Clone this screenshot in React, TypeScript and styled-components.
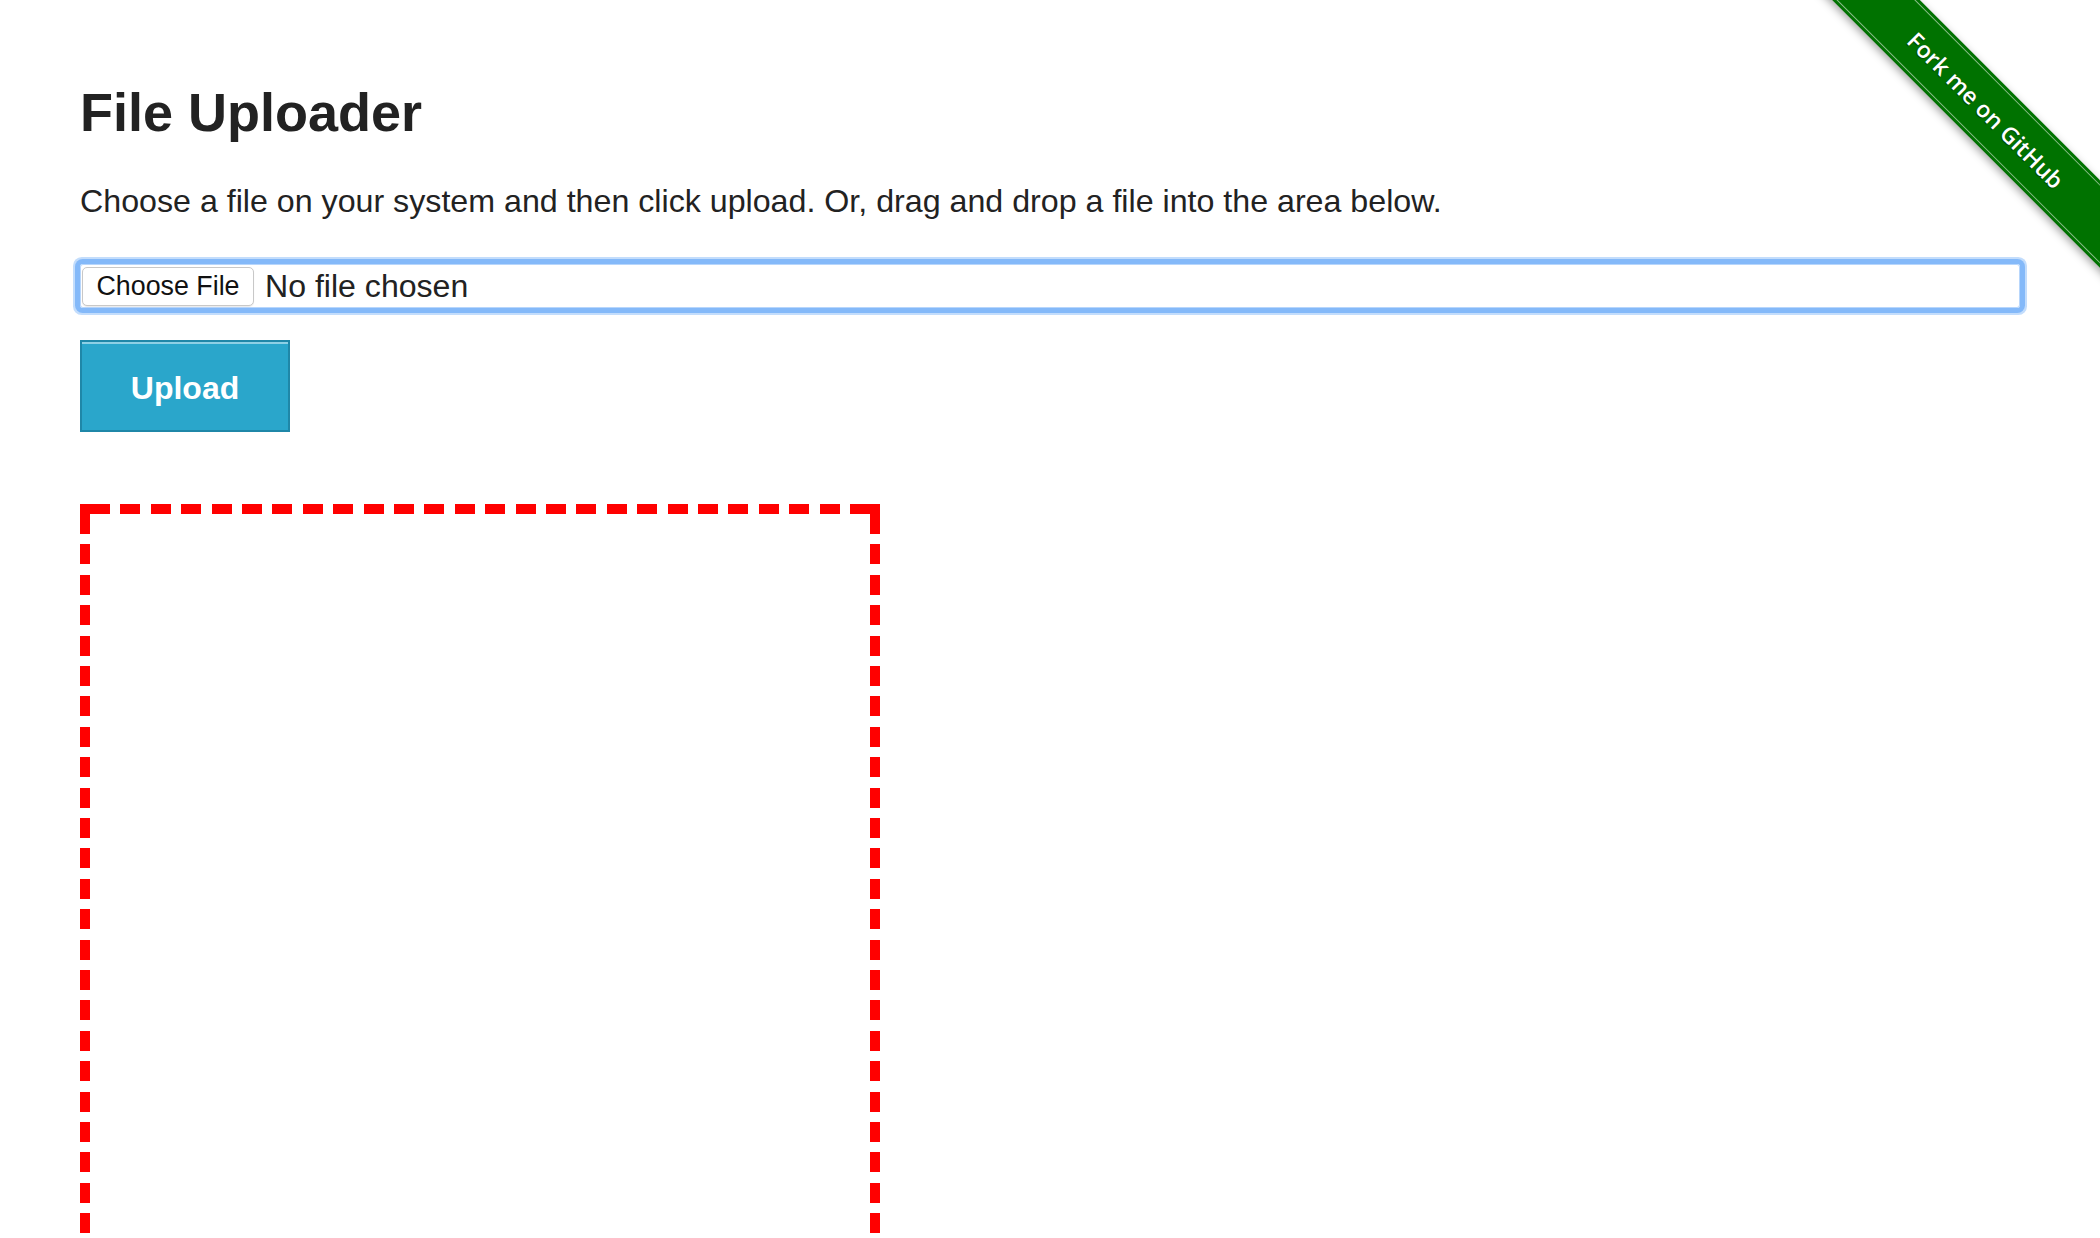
import React from "react";
import styled, { createGlobalStyle } from "styled-components";

const GlobalStyle = createGlobalStyle`
  html, body {
    margin: 0;
    padding: 0;
    background: #ffffff;
    overflow: hidden;
  }
  body {
    font-family: "Liberation Sans", Arial, Helvetica, sans-serif;
    color: #222222;
  }
`;

const Page = styled.main`
  position: relative;
  display: flex;
  flex-direction: column;
  align-items: flex-start;
  padding: 82px 80px 0 80px;
  min-height: 1238px;
  box-sizing: border-box;
`;

const Title = styled.h1`
  margin: 0 0 37px 0;
  font-size: 54px;
  line-height: 60px;
  font-weight: 700;
  color: #222222;
`;

const Lead = styled.p`
  margin: 0 0 41px 0;
  font-size: 32.2px;
  line-height: 44px;
  color: #222222;
`;

const FileField = styled.label`
  display: flex;
  align-items: center;
  gap: 11px;
  width: 100%;
  height: 44px;
  box-sizing: border-box;
  padding: 0 2px;
  border-radius: 3px;
  background: #ffffff;
  box-shadow: inset 0 0 0 1px #b7d6fc, 0 0 0 5px #84b9f9, 0 0 0 7px #c3ddfc;
  cursor: pointer;
`;

const HiddenInput = styled.input`
  display: none;
`;

const ChooseButton = styled.span`
  display: inline-flex;
  align-items: center;
  justify-content: center;
  width: 172px;
  height: 39px;
  box-sizing: border-box;
  border: 1px solid #c8c8c8;
  border-radius: 5px;
  background: #ffffff;
  box-shadow: 0 1px 1px rgba(0, 0, 0, 0.08);
  font-size: 26.8px;
  color: #111111;
`;

const FileName = styled.span`
  font-size: 32.1px;
  color: #222222;
`;

const UploadButton = styled.button`
  margin-top: 32px;
  width: 210px;
  height: 92px;
  box-sizing: border-box;
  border: 2px solid #1f87a8;
  border-radius: 0;
  background: #2aa6cb;
  box-shadow: inset 0 2px 0 #8dd0e5;
  color: #ffffff;
  font-family: "Liberation Sans", Arial, Helvetica, sans-serif;
  font-weight: 700;
  font-size: 32px;
  padding: 5px 0 0 0;
  cursor: pointer;
`;

const DASH = "repeating-linear-gradient(to right, transparent 0 10.4px, #ff0000 10.4px 30.4px)";
const DASH_V = "repeating-linear-gradient(to bottom, transparent 0 10.4px, #ff0000 10.4px 30.4px)";
const SOLID = "linear-gradient(#ff0000, #ff0000)";

const DropZone = styled.div`
  margin-top: 72px;
  width: 800px;
  height: 800px;
  flex-shrink: 0;
  background:
    ${SOLID} left top / 30px 10px no-repeat,
    ${SOLID} left top / 10px 30px no-repeat,
    ${SOLID} right top / 30px 10px no-repeat,
    ${SOLID} right top / 10px 30px no-repeat,
    ${SOLID} left bottom / 30px 10px no-repeat,
    ${SOLID} left bottom / 10px 30px no-repeat,
    ${SOLID} right bottom / 30px 10px no-repeat,
    ${SOLID} right bottom / 10px 30px no-repeat,
    ${DASH} 30px top / 740px 10px no-repeat,
    ${DASH} 30px bottom / 740px 10px no-repeat,
    ${DASH_V} left 0 top 30px / 10px 740px no-repeat,
    ${DASH_V} right 0 top 30px / 10px 740px no-repeat;
`;

const RibbonCorner = styled.div`
  position: absolute;
  top: 0;
  right: 0;
  width: 300px;
  height: 300px;
  overflow: hidden;
  pointer-events: none;
`;

const Ribbon = styled.a`
  position: absolute;
  left: -24px;
  top: 79px;
  width: 420px;
  height: 62px;
  box-sizing: border-box;
  display: flex;
  align-items: center;
  justify-content: center;
  background: #007200;
  transform: rotate(45deg);
  box-shadow: 0 3px 8px rgba(0, 0, 0, 0.35);
  color: #ffffff;
  text-decoration: none;
  font-family: "Open Sans", "Liberation Sans", sans-serif;
  font-weight: 600;
  font-size: 23px;
  text-shadow: 0 1px 1px rgba(0, 0, 0, 0.45);
  pointer-events: auto;

  &::before,
  &::after {
    content: "";
    position: absolute;
    left: 0;
    right: 0;
    height: 1px;
    background: rgba(255, 255, 255, 0.55);
  }
  &::before {
    top: 3px;
  }
  &::after {
    bottom: 3px;
  }
`;

export default function App() {
  return (
    <>
      <GlobalStyle />
      <Page>
        <Title>File Uploader</Title>
        <Lead>
          Choose a file on your system and then click upload. Or, drag and drop a file into the area below.
        </Lead>
        <FileField>
          <HiddenInput type="file" />
          <ChooseButton>Choose File</ChooseButton>
          <FileName>No file chosen</FileName>
        </FileField>
        <UploadButton type="button">Upload</UploadButton>
        <DropZone />
        <RibbonCorner>
          <Ribbon href="#">Fork me on GitHub</Ribbon>
        </RibbonCorner>
      </Page>
    </>
  );
}
